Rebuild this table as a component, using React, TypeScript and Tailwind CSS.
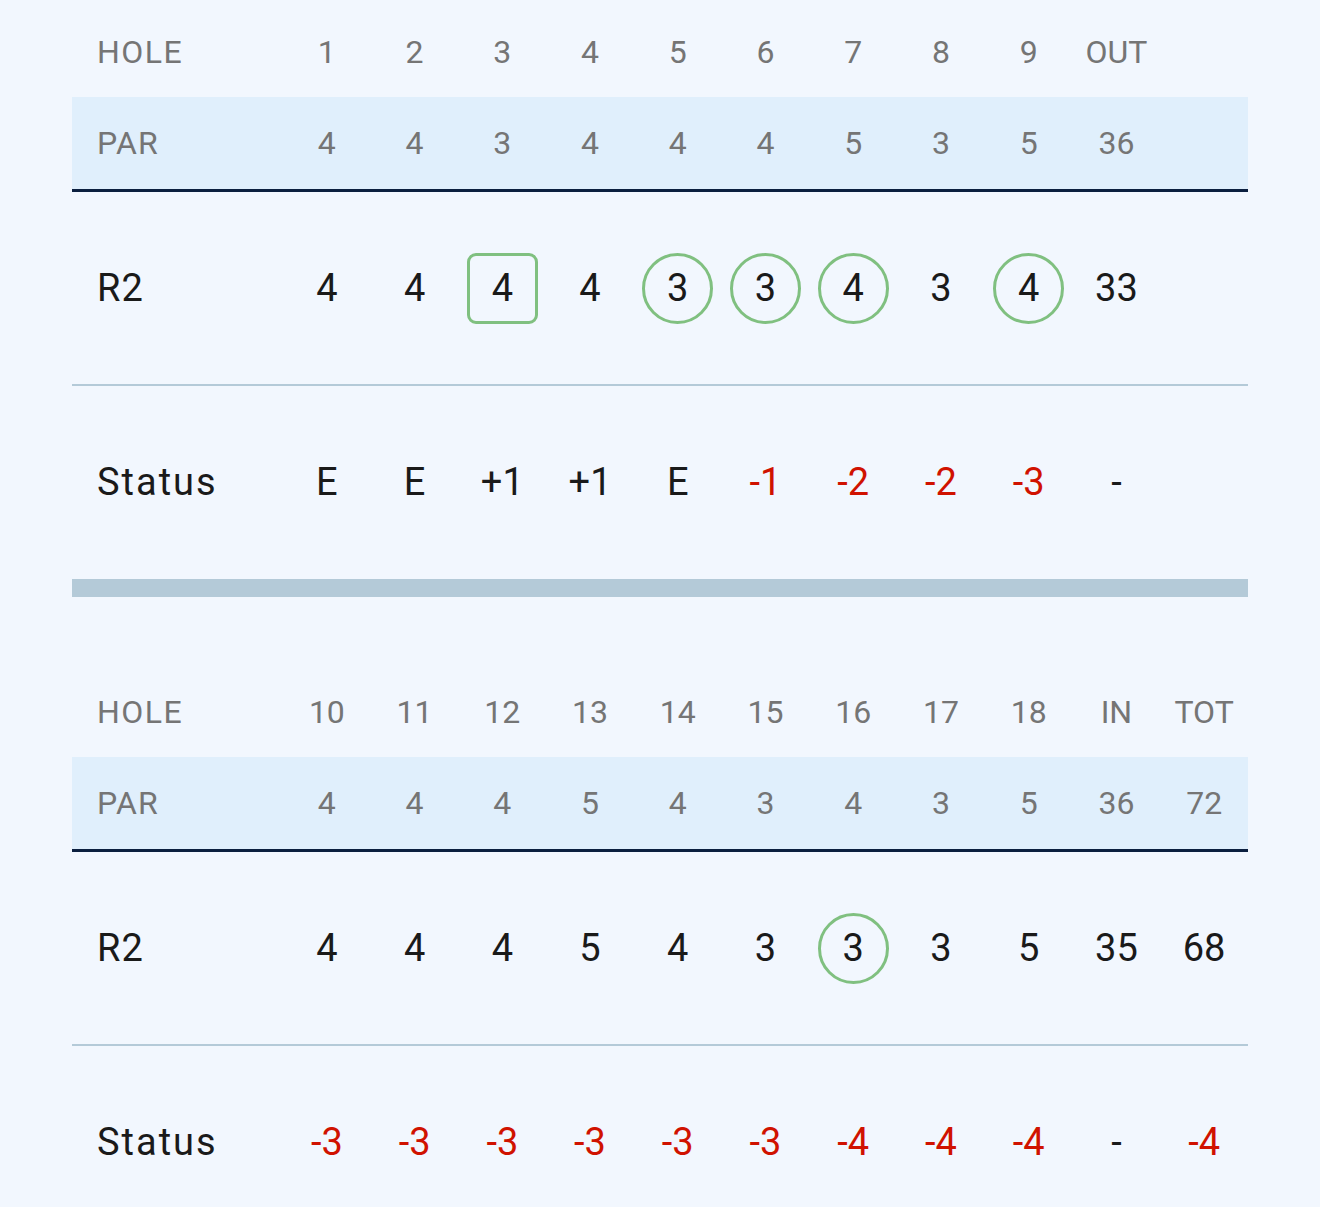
import React from "react";

type Mark = "circle" | "square" | null;

const FONT = { fontFamily: "Roboto, 'Noto Sans', sans-serif" };

function Cell({ v, mark, red }: { v: string; mark?: Mark; red?: boolean }) {
  return (
    <div className="flex items-center justify-center">
      {mark === "circle" ? (
        <div className="flex h-[71px] w-[71px] items-center justify-center rounded-full border-[3px] border-[#80c080]">
          {v}
        </div>
      ) : mark === "square" ? (
        <div className="flex h-[71px] w-[71px] items-center justify-center rounded-[9px] border-[3px] border-[#80c080]">
          {v}
        </div>
      ) : (
        <span className={red ? "text-[#d01200]" : ""}>{v}</span>
      )}
    </div>
  );
}

const GRID = "grid grid-cols-[211px_repeat(11,minmax(0,1fr))] items-center";

function Table({
  holes,
  par,
  r2,
  marks,
  status,
}: {
  holes: string[];
  par: string[];
  r2: string[];
  marks: Mark[];
  status: string[];
}) {
  return (
    <div>
      <div className={`${GRID} h-[91px] text-[32px] text-[#757575]`}>
        <div className="pl-[25px] tracking-[1.5px]">HOLE</div>
        {holes.map((h, i) => (
          <Cell key={i} v={h} />
        ))}
      </div>
      <div className={`${GRID} h-[92px] bg-[#e0effc] text-[32px] text-[#757575] border-b-[3px] border-[#0b1f3f] box-content`}>
        <div className="pl-[25px] tracking-[1px]">PAR</div>
        {par.map((h, i) => (
          <Cell key={i} v={h} />
        ))}
      </div>
      <div className={`${GRID} h-[192px] text-[38px] text-[#1a1a1a] border-b-2 border-[#b4cad8] box-content`}>
        <div className="pl-[25px] tracking-[1px]">R2</div>
        {r2.map((h, i) => (
          <Cell key={i} v={h} mark={marks[i]} />
        ))}
      </div>
      <div className={`${GRID} h-[193px] text-[38px] text-[#1a1a1a]`}>
        <div className="pl-[25px] tracking-[2px]">Status</div>
        {status.map((h, i) => (
          <Cell key={i} v={h} red={h.startsWith("-") && h.length > 1} />
        ))}
      </div>
    </div>
  );
}

export default function App() {
  return (
    <div className="min-h-[1207px] bg-[#f2f7fe] px-[72px] pt-[6px]" style={FONT}>
      <Table
        holes={["1", "2", "3", "4", "5", "6", "7", "8", "9", "OUT", ""]}
        par={["4", "4", "3", "4", "4", "4", "5", "3", "5", "36", ""]}
        r2={["4", "4", "4", "4", "3", "3", "4", "3", "4", "33", ""]}
        marks={[null, null, "square", null, "circle", "circle", "circle", null, "circle", null, null]}
        status={["E", "E", "+1", "+1", "E", "-1", "-2", "-2", "-3", "-", ""]}
      />
      <div className="h-[18px] bg-[#b4cad8]" />
      <div className="mt-[69px]">
        <Table
          holes={["10", "11", "12", "13", "14", "15", "16", "17", "18", "IN", "TOT"]}
          par={["4", "4", "4", "5", "4", "3", "4", "3", "5", "36", "72"]}
          r2={["4", "4", "4", "5", "4", "3", "3", "3", "5", "35", "68"]}
          marks={[null, null, null, null, null, null, "circle", null, null, null, null]}
          status={["-3", "-3", "-3", "-3", "-3", "-3", "-4", "-4", "-4", "-", "-4"]}
        />
      </div>
    </div>
  );
}
